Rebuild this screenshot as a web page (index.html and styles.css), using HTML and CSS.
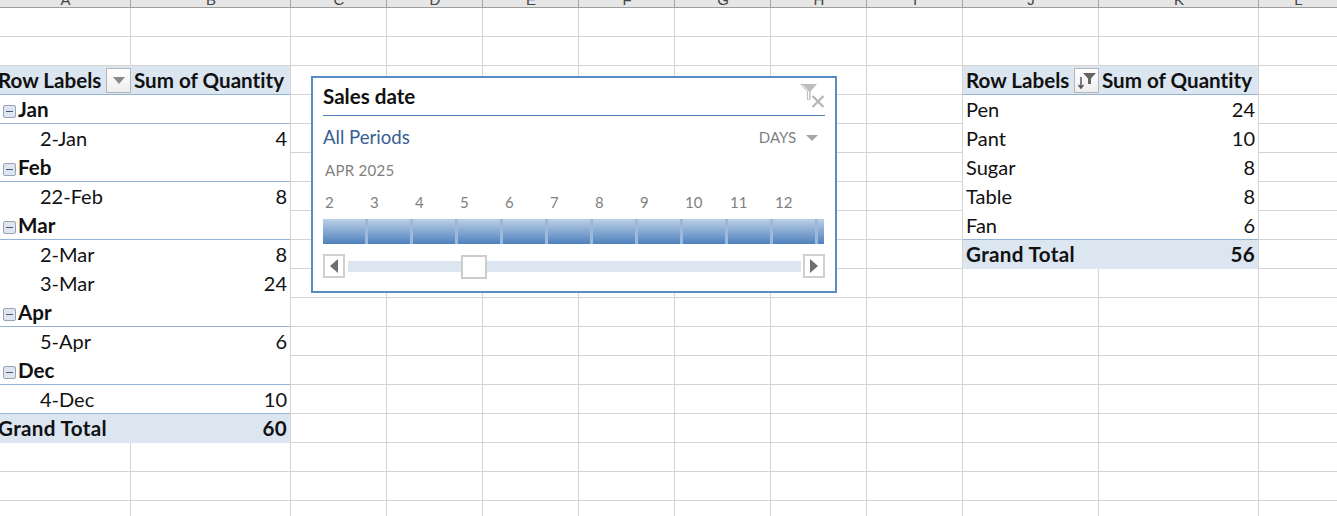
FILE: index.html
```html
<!DOCTYPE html>
<html lang="en">
<head>
  <meta charset="UTF-8" />
  <title>Sales pivot</title>
  <link rel="stylesheet" href="styles.css">
</head>
<body>
  <div class="sheet">
    <div class="col col-a"><span>A</span></div>
    <div class="col col-b"><span>B</span></div>
    <div class="col col-c"><span>C</span></div>
    <div class="col col-d"><span>D</span></div>
    <div class="col col-e"><span>E</span></div>
    <div class="col col-f"><span>F</span></div>
    <div class="col col-g"><span>G</span></div>
    <div class="col col-h"><span>H</span></div>
    <div class="col col-i"><span>I</span></div>
    <div class="col col-j"><span>J</span></div>
    <div class="col col-k"><span>K</span></div>
    <div class="col col-l"><span>L</span></div>

    <table class="pivot pivot-left">
      <tr class="head">
        <td class="label-col"><div class="head-label">Row Labels
          <button class="drop">
            <svg width="14" height="9" viewBox="0 0 14 9"><path d="M1 1h12L7 8z" fill="#8a8a8a"/></svg>
          </button></div></td>
        <td class="sum-head">Sum of Quantity</td>
      </tr>
      <tr class="group"><td colspan="2"><span class="minus"></span>Jan</td></tr>
      <tr class="item"><td class="indent">2-Jan</td><td class="num">4</td></tr>
      <tr class="group"><td colspan="2"><span class="minus"></span>Feb</td></tr>
      <tr class="item"><td class="indent">22-Feb</td><td class="num">8</td></tr>
      <tr class="group"><td colspan="2"><span class="minus"></span>Mar</td></tr>
      <tr class="item"><td class="indent">2-Mar</td><td class="num">8</td></tr>
      <tr class="item"><td class="indent">3-Mar</td><td class="num">24</td></tr>
      <tr class="group"><td colspan="2"><span class="minus"></span>Apr</td></tr>
      <tr class="item"><td class="indent">5-Apr</td><td class="num">6</td></tr>
      <tr class="group"><td colspan="2"><span class="minus"></span>Dec</td></tr>
      <tr class="item before-total"><td class="indent">4-Dec</td><td class="num">10</td></tr>
      <tr class="total"><td>Grand Total</td><td class="num">60</td></tr>
    </table>

    <table class="pivot pivot-right">
      <tr class="head">
        <td class="label-col"><div class="head-label">Row Labels
          <button class="drop">
            <svg width="21" height="20" viewBox="0 0 21 20">
              <path d="M7 3h13l-5 5.500V14h-3V8.500z" fill="#666"/>
              <path d="M5 7v11M2.500 15l2.500 3 2.500-3" fill="none" stroke="#555" stroke-width="1.500"/>
            </svg>
          </button></div></td>
        <td class="sum-head">Sum of Quantity</td>
      </tr>
      <tr class="item"><td>Pen</td><td class="num">24</td></tr>
      <tr class="item"><td>Pant</td><td class="num">10</td></tr>
      <tr class="item"><td>Sugar</td><td class="num">8</td></tr>
      <tr class="item"><td>Table</td><td class="num">8</td></tr>
      <tr class="item before-total"><td>Fan</td><td class="num">6</td></tr>
      <tr class="total"><td>Grand Total</td><td class="num">56</td></tr>
    </table>
  </div>

  <div class="slicer">
    <div class="slicer-title">
      <span>Sales date</span>
      <svg class="clear-filter" width="24" height="25" viewBox="0 0 24 25">
        <path d="M0 1h17l-6.500 7.500V17H7V8.500z" fill="#bdbdbd"/>
        <path d="M2.500 2l6 6.500V16h1" fill="none" stroke="#fff" stroke-width="1"/>
        <path d="M12.500 13l11 11M23.500 13l-11 11" stroke="#b5b5b5" stroke-width="2.200"/>
      </svg>
    </div>
    <div class="slicer-periods">
      <span class="all-periods">All Periods</span>
      <span class="level">DAYS <i class="level-arrow"></i></span>
    </div>
    <div class="slicer-month">APR 2025</div>
    <div class="day-labels">
      <span>2</span><span>3</span><span>4</span><span>5</span><span>6</span><span>7</span><span>8</span><span>9</span><span>10</span><span>11</span><span>12</span>
    </div>
    <div class="day-bar">
      <i></i><i></i><i></i><i></i><i></i><i></i><i></i><i></i><i></i><i></i><i></i><i class="day-stub"></i>
    </div>
    <div class="scroller">
      <button class="scroll-btn"><svg width="10" height="14" viewBox="0 0 10 14"><path d="M9 0v14L1 7z" fill="#6f6f6f"/></svg></button>
      <div class="track"><div class="thumb"></div></div>
      <button class="scroll-btn"><svg width="10" height="14" viewBox="0 0 10 14"><path d="M1 0v14l8-7z" fill="#6f6f6f"/></svg></button>
    </div>
  </div>
</body>
</html>
```

FILE: styles.css
```css
html, body {
  margin: 0;
  height: 516px;
  overflow: hidden;
  background: white;
}

body {
  position: relative;
  font-family: Lato, "Open Sans", sans-serif;
  font-variant-ligatures: none;
  color: #111;
}

.sheet {
  display: grid;
  grid-template-columns: 131px 160px repeat(7, 96px) 136px 160px 1fr;
  grid-template-rows: 66px auto 1fr;
  height: 516px;
  background: linear-gradient(to bottom, transparent 28px, #d4d4d4 28px) 0 8px / 100% 29px repeat-y;
}

.col {
  grid-row: 1 / 4;
  border-right: 1px solid #d4d4d4;
  box-sizing: border-box;
}

.col-a { grid-column: 1; }
.col-b { grid-column: 2; }
.col-c { grid-column: 3; }
.col-d { grid-column: 4; }
.col-e { grid-column: 5; }
.col-f { grid-column: 6; }
.col-g { grid-column: 7; }
.col-h { grid-column: 8; }
.col-i { grid-column: 9; }
.col-j { grid-column: 10; }
.col-k { grid-column: 11; }
.col-l { grid-column: 12; border-right: none; }

.col span {
  display: block;
  height: 7px;
  overflow: hidden;
  background: #e6e6e6;
  border-bottom: 1px solid #9e9e9e;
  margin-right: -1px;
  box-shadow: inset -1px 0 0 #a8a8a8;
  text-align: center;
  font-family: "Liberation Sans", sans-serif;
  font-size: 15px;
  line-height: 0;
  color: #444;
}

.pivot {
  grid-row: 2;
  align-self: start;
  border-collapse: separate;
  border-spacing: 0;
  table-layout: fixed;
  background: white;
  font-size: 20px;
}

.pivot-left {
  grid-column: 1 / 3;
  width: 290px;
}

.pivot-right {
  grid-column: 10 / 12;
  width: 295px;
}

.pivot td {
  box-sizing: border-box;
  height: 29px;
  padding: 0;
  white-space: nowrap;
  line-height: 27px;
}

.pivot-left .label-col { width: 131px; }
.pivot-right .label-col { width: 136px; }
.pivot-right td:first-child { padding-left: 3px; }

.pivot .head td {
  background: #dce6f1;
  border-bottom: 1px solid #95b3d7;
  font-size: 20.6px;
  font-weight: 700;
}

.pivot-left .head .label-col,
.pivot-left .total td:first-child {
  text-indent: -2px;
}

.head-label {
  display: flex;
  justify-content: space-between;
  align-items: center;
  height: 28px;
}

.pivot .sum-head {
  padding-left: 3px;
}

.drop {
  display: flex;
  align-items: center;
  justify-content: center;
  width: 25px;
  height: 25px;
  padding: 0;
  border: 1px solid #b5b5b5;
  background: linear-gradient(to bottom, #ffffff, #eeeeee);
}

.pivot .group td {
  font-size: 20.6px;
  font-weight: 700;
  border-bottom: 1px solid #95b3d7;
}

.minus {
  display: inline-block;
  position: relative;
  box-sizing: border-box;
  width: 13px;
  height: 13px;
  margin: 0 2px 0 3px;
  vertical-align: -1px;
  border: 1px solid #96a3b8;
  border-radius: 2px;
  background: #dfe6f0;
}

.minus::after {
  content: "";
  position: absolute;
  left: 2px;
  right: 2px;
  top: 5px;
  height: 1px;
  background: #44587a;
}

.pivot .indent {
  padding-left: 40px;
}

.pivot .num {
  text-align: right;
  padding-right: 3px;
}

.pivot .before-total td {
  border-bottom: 1px solid #95b3d7;
}

.pivot .total td {
  background: #dce6f1;
  font-size: 20.6px;
  font-weight: 700;
  line-height: 29px;
  letter-spacing: 0.35px;
}

/* slicer floats over the cells */
.slicer {
  position: absolute;
  left: 311px;
  top: 76px;
  box-sizing: border-box;
  width: 526px;
  height: 217px;
  padding: 0 10px;
  background: white;
  border: 2px solid #5b8bc7;
}

.slicer-title {
  display: flex;
  justify-content: space-between;
  height: 37px;
  border-bottom: 1px solid #4f81bd;
  font-size: 20.6px;
  font-weight: 700;
  line-height: 37px;
}

.clear-filter {
  margin-top: 5px;
  margin-right: 1px;
}

.slicer-periods {
  display: flex;
  justify-content: space-between;
  align-items: center;
  height: 42px;
  padding-right: 7px;
}

.all-periods {
  font-size: 18.6px;
  color: #376092;
}

.level {
  font-size: 15px;
  color: #7f7f7f;
}

.level-arrow {
  display: inline-block;
  width: 0;
  height: 0;
  margin-left: 6px;
  vertical-align: 2px;
  border-left: 6px solid transparent;
  border-right: 6px solid transparent;
  border-top: 6px solid #a6a6a6;
}

.slicer-month {
  height: 24px;
  padding-left: 2px;
  font-size: 15px;
  line-height: 24px;
  letter-spacing: 0.3px;
  color: #7f7f7f;
}

.day-labels {
  display: flex;
  height: 29px;
  margin-top: 8px;
  font-size: 15px;
  line-height: 24px;
  color: #7f7f7f;
}

.day-labels span {
  width: 45px;
  padding-left: 2px;
  box-sizing: border-box;
}

.day-bar {
  display: flex;
  width: 501px;
  height: 25px;
  background: linear-gradient(to bottom, #bcd0e7, #4f81bd);
}

.day-bar i {
  width: 42px;
  border-right: 3px solid #9db9da;
}

.day-bar .day-stub {
  width: 6px;
  border-right: none;
}

.scroller {
  display: flex;
  align-items: center;
  gap: 3px;
  margin-top: 10px;
}

.scroll-btn {
  display: flex;
  align-items: center;
  justify-content: center;
  width: 22px;
  height: 24px;
  padding: 0;
  border: 2px solid #d0d0d0;
  background: white;
}

.track {
  position: relative;
  flex: 1;
  height: 11px;
  margin-right: -1px;
  background: #dce6f1;
}

.thumb {
  position: absolute;
  left: 113px;
  top: -6px;
  box-sizing: border-box;
  width: 26px;
  height: 24px;
  background: white;
  border: 2px solid #cccccc;
}
```
